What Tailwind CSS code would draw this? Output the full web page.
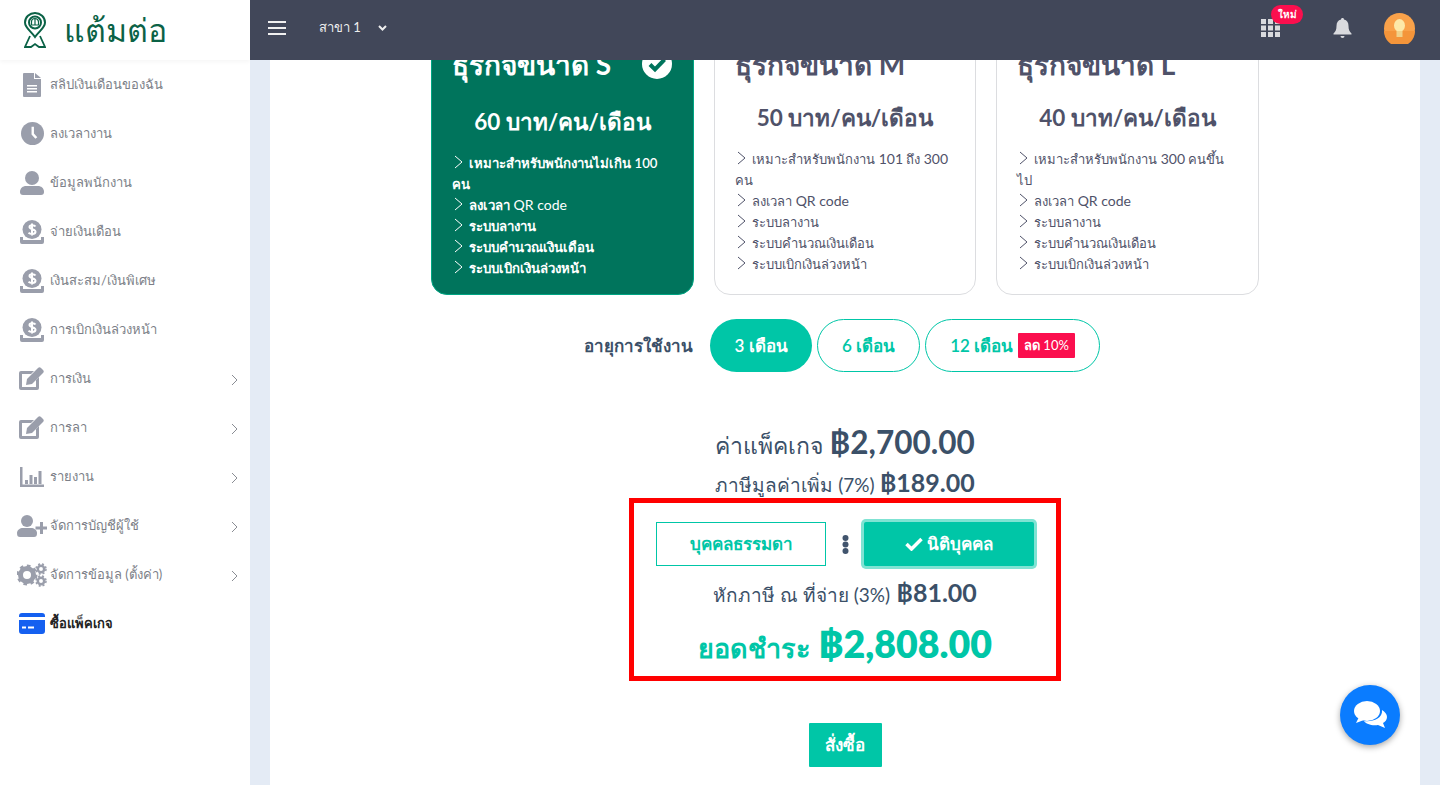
<!DOCTYPE html>
<html lang="th">
<head>
  <meta charset="UTF-8" />
  <title>แต้มต่อ - ซื้อแพ็คเกจ</title>
  <script src="https://cdn.jsdelivr.net/npm/@tailwindcss/browser@4"></script>
</head>
<body class="font-['Lato','Noto_Sans',sans-serif] text-[#3b5068]">
  <div class="flex h-[785px] w-[1440px] overflow-hidden">
    <!-- sidebar -->
    <aside class="w-[250px] shrink-0 bg-white">
      <div class="flex h-[60px] items-center pl-[24px] shadow-[0_2px_4px_rgba(0,0,0,0.04)]">
        <svg class="h-[36px] w-[22px]" viewBox="0 0 22 36" fill="none" stroke="#0b6246" stroke-width="2">
          <path d="M11 25 C7 19 1 16 1 10.500 A10 9.500 0 0 1 21 10.500 C21 16 15 19 11 25Z" />
          <circle cx="11" cy="10.500" r="6" />
          <path d="M7.500 13v-3a3.500 3.500 0 0 1 7 0v3zM11 7v6" stroke-width="1.200" />
          <path d="M6 24L1 35h6l4-3 4 3h6l-5-11" stroke-width="1.800" />
        </svg>
        <span class="ml-[18px] text-[32px] leading-none font-light text-[#0b6246]">แต้มต่อ</span>
      </div>
      <nav class="flex flex-col text-[13px] text-[#7c7f88]">
        <a class="flex h-[49px] items-center">
          <span class="flex w-[50px] justify-center pl-[14px]"><svg class="h-[24px] w-[18px]" viewBox="0 0 18 24" fill="#9a9eab"><path d="M0 1a1 1 0 0 1 1-1h10v6h7v17a1 1 0 0 1-1 1H1a1 1 0 0 1-1-1z"/><path d="M12 0l6 5h-6z"/><path d="M4 12h10v1.500H4zM4 15h10v1.500H4zM4 18h10v1.500H4z" fill="#fff"/></svg></span>
          <span>สลิปเงินเดือนของฉัน</span>
        </a>
        <a class="flex h-[49px] items-center">
          <span class="flex w-[50px] justify-center pl-[14px]"><svg class="h-[23px] w-[23px]" viewBox="0 0 24 24"><circle cx="12" cy="12" r="12" fill="#9a9eab"/><path d="M11 5h2.500v7l3.500 4-2 1.500-4-4.500z" fill="#fff"/></svg></span>
          <span>ลงเวลางาน</span>
        </a>
        <a class="flex h-[49px] items-center">
          <span class="flex w-[50px] justify-center pl-[14px]"><svg class="h-[24px] w-[24px]" viewBox="0 0 24 24" fill="#9a9eab"><circle cx="12" cy="7" r="7"/><path d="M0 21c0-4 3-6 6-6h12c3 0 6 2 6 6 0 2-1 3-3 3H3c-2 0-3-1-3-3z"/></svg></span>
          <span>ข้อมูลพนักงาน</span>
        </a>
        <a class="flex h-[49px] items-center">
          <span class="flex w-[50px] justify-center pl-[14px]"><svg class="h-[24px] w-[24px]" viewBox="0 0 24 24"><use href="#coin"/></svg></span>
          <span>จ่ายเงินเดือน</span>
        </a>
        <a class="flex h-[49px] items-center">
          <span class="flex w-[50px] justify-center pl-[14px]"><svg class="h-[24px] w-[24px]" viewBox="0 0 24 24"><use href="#coin"/></svg></span>
          <span>เงินสะสม/เงินพิเศษ</span>
        </a>
        <a class="flex h-[49px] items-center">
          <span class="flex w-[50px] justify-center pl-[14px]"><svg class="h-[24px] w-[24px]" viewBox="0 0 24 24"><use href="#coin"/></svg></span>
          <span>การเบิกเงินล่วงหน้า</span>
        </a>
        <a class="flex h-[49px] items-center">
          <span class="flex w-[50px] justify-center pl-[12px]"><svg class="h-[24px] w-[26px]" viewBox="0 0 26 24"><use href="#edit"/></svg></span>
          <span class="flex-1">การเงิน</span>
          <svg class="mr-[12px] mt-[2px] h-[12px] w-[7px]" viewBox="0 0 7 12" fill="none" stroke="#8a8d94"><path d="M1 1l5 5-5 5"/></svg>
        </a>
        <a class="flex h-[49px] items-center">
          <span class="flex w-[50px] justify-center pl-[12px]"><svg class="h-[24px] w-[26px]" viewBox="0 0 26 24"><use href="#edit"/></svg></span>
          <span class="flex-1">การลา</span>
          <svg class="mr-[12px] mt-[2px] h-[12px] w-[7px]" viewBox="0 0 7 12" fill="none" stroke="#8a8d94"><path d="M1 1l5 5-5 5"/></svg>
        </a>
        <a class="flex h-[49px] items-center">
          <span class="flex w-[50px] justify-center pl-[14px]"><svg class="h-[20px] w-[24px]" viewBox="0 0 24 20" fill="#9a9eab"><path d="M0 0h2.500v17.500H24V20H0z"/><path d="M5 13h3v4H5zM9.500 8h3v9h-3zM14 10h3v7h-3zM18.500 4h3v13h-3z"/></svg></span>
          <span class="flex-1">รายงาน</span>
          <svg class="mr-[12px] mt-[2px] h-[12px] w-[7px]" viewBox="0 0 7 12" fill="none" stroke="#8a8d94"><path d="M1 1l5 5-5 5"/></svg>
        </a>
        <a class="flex h-[49px] items-center">
          <span class="flex w-[50px] justify-center pl-[14px]"><svg class="h-[22px] w-[30px]" viewBox="0 0 30 22" fill="#9a9eab"><circle cx="10" cy="6" r="6"/><path d="M0 18c0-3 3-5 6-5h8c3 0 6 2 6 5 0 3-1 4-3 4H3c-2 0-3-1-3-4z"/><path d="M23 7h3v4.500h4v3h-4V19h-3v-4.500h-4.500v-3H23z"/></svg></span>
          <span class="flex-1">จัดการบัญชีผู้ใช้</span>
          <svg class="mr-[12px] mt-[2px] h-[12px] w-[7px]" viewBox="0 0 7 12" fill="none" stroke="#8a8d94"><path d="M1 1l5 5-5 5"/></svg>
        </a>
        <a class="flex h-[49px] items-center">
          <span class="flex w-[50px] justify-center pl-[14px]"><svg class="h-[24px] w-[30px]" viewBox="0 0 30 24"><circle cx="10" cy="12" r="6.500" fill="none" stroke="#9a9eab" stroke-width="5"/><circle cx="10" cy="12" r="9" fill="none" stroke="#9a9eab" stroke-width="3" stroke-dasharray="3.500 3.500"/><circle cx="24" cy="6" r="3.200" fill="none" stroke="#9a9eab" stroke-width="2.500"/><circle cx="24" cy="6" r="5" fill="none" stroke="#9a9eab" stroke-width="1.500" stroke-dasharray="2 2"/><circle cx="24" cy="18" r="3.200" fill="none" stroke="#9a9eab" stroke-width="2.500"/><circle cx="24" cy="18" r="5" fill="none" stroke="#9a9eab" stroke-width="1.500" stroke-dasharray="2 2"/></svg></span>
          <span class="flex-1">จัดการข้อมูล (ตั้งค่า)</span>
          <svg class="mr-[12px] mt-[2px] h-[12px] w-[7px]" viewBox="0 0 7 12" fill="none" stroke="#8a8d94"><path d="M1 1l5 5-5 5"/></svg>
        </a>
        <a class="flex h-[49px] items-center font-semibold text-[#222]">
          <span class="flex w-[50px] justify-center pl-[14px]"><svg class="h-[21px] w-[26px]" viewBox="0 0 26 21" fill="#1560f0"><path d="M0 3a3 3 0 0 1 3-3h20a3 3 0 0 1 3 3v1H0zM0 7h26v11a3 3 0 0 1-3 3H3a3 3 0 0 1-3-3z"/><path d="M3 13.500h4v2H3zM9 13.500h6v2H9z" fill="#fff"/></svg></span>
          <span>ซื้อแพ็คเกจ</span>
        </a>
      </nav>
    </aside>

    <div class="flex min-w-0 flex-1 flex-col">
      <!-- top bar -->
      <header class="relative z-10 flex h-[60px] shrink-0 items-center bg-[#414759] pb-[4px] pl-[18px] pr-[25px] text-white">
        <svg class="h-[14px] w-[18px]" viewBox="0 0 18 14" fill="#f0f0f0"><path d="M0 0h18v2H0zM0 6h18v2H0zM0 12h18v2H0z"/></svg>
        <span class="ml-[33px] text-[13px] text-[#eee]">สาขา 1</span>
        <svg class="ml-[17px] h-[6px] w-[9px]" viewBox="0 0 9 6" fill="none" stroke="#eee" stroke-width="2"><path d="M1 1l3.500 3.500L8 1"/></svg>
        <div class="relative ml-auto mr-[53px]">
          <svg class="block h-[18px] w-[19px]" viewBox="0 0 19 18" fill="#d9dade"><path d="M0 0h5v5H0zM7 0h5v5H7zM14 0h5v5h-5zM0 6.500h5v5H0zM7 6.500h5v5H7zM14 6.500h5v5h-5zM0 13h5v5H0zM7 13h5v5H7zM14 13h5v5h-5z"/></svg>
          <span class="absolute -top-[14px] left-[10px] flex h-[19px] w-[32px] items-center justify-center rounded-full bg-[#fb0f4e] text-[10px] font-bold text-white">ใหม่</span>
        </div>
        <svg class="mr-[32px] h-[20px] w-[19px]" viewBox="0 0 18 20" fill="#d9dade"><path d="M9 0c1 0 1.500.7 1.500 1.500C13.500 2.200 15 4.500 15 8c0 4 1 5.500 3 7.500v1H0v-1C2 13.500 3 12 3 8c0-3.500 1.500-5.800 4.500-6.500C7.500.7 8 0 9 0z"/><path d="M7 18h4a2 2 0 0 1-4 0z"/></svg>
        <svg class="h-[31px] w-[31px]" viewBox="0 0 31 31"><circle cx="15.500" cy="15.500" r="15.500" fill="#f9a24a"/><path d="M0 18h31a15.500 15.500 0 0 1-31 0z" fill="#f4953a"/><ellipse cx="15.500" cy="12.500" rx="5.500" ry="6.500" fill="#fde9a8"/><path d="M12.500 18h6v6h-6z" fill="#f1d28a"/></svg>
      </header>

      <!-- page -->
      <main class="relative min-h-0 flex-1 overflow-hidden bg-[#e4ebf5] px-[20px]">
        <div class="h-[900px] bg-white">
          <div class="-mt-[29px] flex justify-center gap-[20px]">
            <div class="h-[264px] w-[263px] rounded-[16px] border border-[#00a583] bg-[#00745c] px-[20px] pt-[12px] text-white">
              <div class="flex items-center justify-between pr-[1px]">
                <h3 class="text-[28px] leading-[40px] font-bold">ธุรกิจขนาด S</h3>
                <svg class="h-[30px] w-[30px]" viewBox="0 0 30 30"><circle cx="15" cy="15" r="15" fill="#fff"/><path d="M8 15.500l5 5 9.500-10" fill="none" stroke="#00745c" stroke-width="4"/></svg>
              </div>
              <p class="mt-[22px] text-center text-[22.5px] leading-[32px] font-bold">60 บาท/คน/เดือน</p>
              <ul class="mt-[15px] text-[13.2px] leading-[21px] font-semibold">
                <li><svg class="ml-[2px] mr-[3px] inline h-[14px] w-[9px] align-[-1px]" viewBox="0 0 9 14" fill="none" stroke="#fff"><path d="M1 1l7 6-7 6"/></svg> เหมาะสำหรับพนักงานไม่เกิน 100<br />คน</li>
                <li><svg class="ml-[2px] mr-[3px] inline h-[14px] w-[9px] align-[-1px]" viewBox="0 0 9 14" fill="none" stroke="#fff"><path d="M1 1l7 6-7 6"/></svg> ลงเวลา <span class="text-[14px] leading-none font-normal">QR code</span></li>
                <li><svg class="ml-[2px] mr-[3px] inline h-[14px] w-[9px] align-[-1px]" viewBox="0 0 9 14" fill="none" stroke="#fff"><path d="M1 1l7 6-7 6"/></svg> ระบบลางาน</li>
                <li><svg class="ml-[2px] mr-[3px] inline h-[14px] w-[9px] align-[-1px]" viewBox="0 0 9 14" fill="none" stroke="#fff"><path d="M1 1l7 6-7 6"/></svg> ระบบคำนวณเงินเดือน</li>
                <li><svg class="ml-[2px] mr-[3px] inline h-[14px] w-[9px] align-[-1px]" viewBox="0 0 9 14" fill="none" stroke="#fff"><path d="M1 1l7 6-7 6"/></svg> ระบบเบิกเงินล่วงหน้า</li>
              </ul>
            </div>
            <div class="h-[264px] w-[262px] rounded-[16px] border border-[#dcdde0] bg-white pl-[20px] pr-[10px] pt-[12px] text-[#4f5269]">
              <h3 class="text-[28px] leading-[40px] font-bold">ธุรกิจขนาด M</h3>
              <p class="mt-[18px] pr-[10px] text-center text-[22.5px] leading-[32px] font-bold">50 บาท/คน/เดือน</p>
              <ul class="mt-[15px] text-[13px] leading-[21px]">
                <li><svg class="ml-[2px] mr-[3px] inline h-[14px] w-[9px] align-[-1px]" viewBox="0 0 9 14" fill="none" stroke="#4f5269"><path d="M1 1l7 6-7 6"/></svg> เหมาะสำหรับพนักงาน <span class="text-[14px] leading-none">101</span> ถึง <span class="text-[14px] leading-none">300</span><br />คน</li>
                <li><svg class="ml-[2px] mr-[3px] inline h-[14px] w-[9px] align-[-1px]" viewBox="0 0 9 14" fill="none" stroke="#4f5269"><path d="M1 1l7 6-7 6"/></svg> ลงเวลา <span class="text-[14px] leading-none">QR code</span></li>
                <li><svg class="ml-[2px] mr-[3px] inline h-[14px] w-[9px] align-[-1px]" viewBox="0 0 9 14" fill="none" stroke="#4f5269"><path d="M1 1l7 6-7 6"/></svg> ระบบลางาน</li>
                <li><svg class="ml-[2px] mr-[3px] inline h-[14px] w-[9px] align-[-1px]" viewBox="0 0 9 14" fill="none" stroke="#4f5269"><path d="M1 1l7 6-7 6"/></svg> ระบบคำนวณเงินเดือน</li>
                <li><svg class="ml-[2px] mr-[3px] inline h-[14px] w-[9px] align-[-1px]" viewBox="0 0 9 14" fill="none" stroke="#4f5269"><path d="M1 1l7 6-7 6"/></svg> ระบบเบิกเงินล่วงหน้า</li>
              </ul>
            </div>
            <div class="h-[264px] w-[263px] rounded-[16px] border border-[#dcdde0] bg-white pl-[20px] pr-[10px] pt-[12px] text-[#4f5269]">
              <h3 class="text-[28px] leading-[40px] font-bold">ธุรกิจขนาด L</h3>
              <p class="mt-[18px] pr-[10px] text-center text-[22.5px] leading-[32px] font-bold">40 บาท/คน/เดือน</p>
              <ul class="mt-[15px] text-[13px] leading-[21px]">
                <li><svg class="ml-[2px] mr-[3px] inline h-[14px] w-[9px] align-[-1px]" viewBox="0 0 9 14" fill="none" stroke="#4f5269"><path d="M1 1l7 6-7 6"/></svg> เหมาะสำหรับพนักงาน <span class="text-[14px] leading-none">300</span> คนขึ้น<br />ไป</li>
                <li><svg class="ml-[2px] mr-[3px] inline h-[14px] w-[9px] align-[-1px]" viewBox="0 0 9 14" fill="none" stroke="#4f5269"><path d="M1 1l7 6-7 6"/></svg> ลงเวลา <span class="text-[14px] leading-none">QR code</span></li>
                <li><svg class="ml-[2px] mr-[3px] inline h-[14px] w-[9px] align-[-1px]" viewBox="0 0 9 14" fill="none" stroke="#4f5269"><path d="M1 1l7 6-7 6"/></svg> ระบบลางาน</li>
                <li><svg class="ml-[2px] mr-[3px] inline h-[14px] w-[9px] align-[-1px]" viewBox="0 0 9 14" fill="none" stroke="#4f5269"><path d="M1 1l7 6-7 6"/></svg> ระบบคำนวณเงินเดือน</li>
                <li><svg class="ml-[2px] mr-[3px] inline h-[14px] w-[9px] align-[-1px]" viewBox="0 0 9 14" fill="none" stroke="#4f5269"><path d="M1 1l7 6-7 6"/></svg> ระบบเบิกเงินล่วงหน้า</li>
              </ul>
            </div>
          </div>

          <!-- duration -->
          <div class="mt-[24px] flex items-center justify-center pr-[6px]">
            <span class="mr-[17px] text-[17px] font-bold">อายุการใช้งาน</span>
            <button class="h-[53px] w-[102px] rounded-full bg-[#00c6a7] text-[17px] font-semibold text-white">3 เดือน</button>
            <button class="ml-[5px] h-[53px] w-[103px] rounded-full border border-[#00c6a7] text-[17px] font-semibold text-[#00c6a7]">6 เดือน</button>
            <button class="ml-[5px] flex h-[53px] w-[175px] items-center justify-center rounded-full border border-[#00c6a7] text-[17px] font-semibold text-[#00c6a7]">12 เดือน<span class="ml-[5px] flex h-[25px] items-center rounded-[1px] bg-[#fb0f4e] px-[6px] text-[13px] text-white">ลด&nbsp;<span class="font-normal">10%</span></span></button>
          </div>

          <!-- summary -->
          <div class="mt-[48px] flex flex-col items-center">
            <p class="text-[23px] leading-[44px]">ค่าแพ็คเกจ <span class="text-[31.5px] font-bold">฿2,700.00</span></p>
            <p class="-mt-[4px] text-[19px] leading-[38px]">ภาษีมูลค่าเพิ่ม (7%) <span class="text-[25px] font-bold">฿189.00</span></p>
            <div class="-mt-[6px] flex h-[183px] w-[432px] flex-col items-center border-[5px] border-[#ff0000] pt-[19px]">
              <div class="flex items-center">
                <button class="h-[44px] w-[170px] border border-[#00c6a7] text-[17px] font-semibold text-[#00c6a7]">บุคคลธรรมดา</button>
                <svg class="ml-[16px] mr-[15px] h-[19px] w-[7px]" viewBox="0 0 7 19" fill="#41546d"><circle cx="3.500" cy="3" r="3"/><circle cx="3.500" cy="9.500" r="3"/><circle cx="3.500" cy="16" r="3"/></svg>
                <button class="flex h-[44px] w-[170px] items-center justify-center gap-[4px] rounded-[2px] bg-[#00c6a7] text-[17px] font-bold text-white shadow-[0_0_0_3px_#7fe3d3]">
                  <svg class="h-[14px] w-[18px]" viewBox="0 0 18 14" fill="none" stroke="#fff" stroke-width="3.500"><path d="M1.500 7l5 5L16.500 2"/></svg>นิติบุคคล</button>
              </div>
              <p class="mt-[4px] text-[19px] leading-[44px]">หักภาษี ณ ที่จ่าย (3%) <span class="ml-[1px] text-[25px] font-bold">฿81.00</span></p>
              <p class="text-[27px] leading-[54px] font-bold text-[#00c6a7]">ยอดชำระ <span class="text-[37.5px] font-extrabold">฿2,808.00</span></p>
            </div>
            <button class="mt-[42px] h-[44px] w-[73px] rounded-[1px] bg-[#00c6a7] text-[17px] font-bold text-white">สั่งซื้อ</button>
          </div>
        </div>

        <!-- chat bubble -->
        <button class="absolute bottom-[40px] right-[40px] flex h-[60px] w-[60px] items-center justify-center rounded-full bg-[#0a7cff] shadow-[0_2px_6px_rgba(0,0,0,0.35)]">
          <svg class="h-[28px] w-[33px]" viewBox="0 0 33 28" fill="#fff"><ellipse cx="13" cy="10" rx="13" ry="10"/><path d="M5 16l-3 6 8-3z"/><path d="M28 9c3 2 5 4 5 7 0 3-2 5-4 6l2 5-7-3c-6 1-12-1-14-4 8 1 19-2 18-11z"/></svg>
        </button>
      </main>
    </div>
  </div>

  <!-- shared icons -->
  <svg class="hidden">
    <defs>
      <g id="coin"><circle cx="12" cy="9.500" r="9.500" fill="#9a9eab"/><path d="M0 17h3v3h18v-3h3v5a2 2 0 0 1-2 2H2a2 2 0 0 1-2-2z" fill="#9a9eab"/><path d="M15.500 6.500c-1-1.500-6-2-6 .5s6.500 2 6 5c-.5 2.500-5 2.500-7 .8M12 3.500v12" fill="none" stroke="#fff" stroke-width="2"/></g>
      <g id="edit"><path d="M3 4h13l-3 3H4v13h14v-7l3-3v11a2 2 0 0 1-2 2H3a2 2 0 0 1-2-2V6a2 2 0 0 1 2-2z" fill="#9a9eab"/><path d="M9 12L20 1c1-1 2-1 3 0l2 2c1 1 1 2 0 3L14 17l-6 1z" fill="#9a9eab"/></g>
    </defs>
  </svg>
</body>
</html>
